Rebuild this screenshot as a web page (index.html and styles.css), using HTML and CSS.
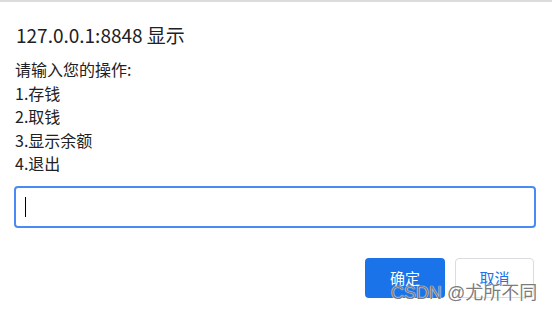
FILE: index.html
```html
<!DOCTYPE html>
<html lang="zh">
<head>
<meta charset="utf-8">
<title>prompt</title>
<link rel="stylesheet" href="styles.css">
</head>
<body>
<div class="topline"></div>
<div class="dialog">
  <div class="title">127.0.0.1:8848 显示</div>
  <div class="message">
    <div class="line">请输入您的操作:</div>
    <div class="line">1.存钱</div>
    <div class="line">2.取钱</div>
    <div class="line">3.显示余额</div>
    <div class="line">4.退出</div>
  </div>
  <div class="field"><span class="caret"></span></div>
  <div class="actions">
    <button class="btn btn-primary">确定</button>
    <button class="btn btn-secondary">取消</button>
  </div>
</div>
<div class="watermark">CSDN @尤所不同</div>
</body>
</html>
```
FILE: styles.css
```css
html, body {
  margin: 0;
  padding: 0;
  background: #fff;
}
body {
  width: 552px;
  height: 314px;
  overflow: hidden;
  position: relative;
  font-family: "Noto Sans CJK SC", "Noto Sans", sans-serif;
  color: #202124;
}
.topline {
  height: 2px;
  background: #dcdcdc;
}
.dialog {
  padding: 20px 16px 0 14px;
}
.title {
  font-size: 19px;
  line-height: 26px;
  padding-left: 2px;
}
.message {
  margin-top: 10px;
  padding-left: 1px;
  font-size: 16px;
  line-height: 23.5px;
}
.field {
  margin-top: 10px;
  height: 38px;
  width: 509px;
  border: 2px solid #4a8af4;
  border-radius: 4px;
  display: flex;
  align-items: center;
  padding-left: 9px;
  box-sizing: content-box;
}
.caret {
  display: block;
  width: 1px;
  height: 20px;
  background: #000;
}
.actions {
  display: flex;
  justify-content: flex-end;
  gap: 10px;
  margin-top: 30px;
  padding-right: 2px;
}
.btn {
  width: 80px;
  height: 40px;
  border-radius: 4px;
  font-family: "Noto Sans CJK SC", sans-serif;
  font-size: 15px;
  padding: 0;
  box-sizing: border-box;
}
.btn-primary {
  background: #1a73e8;
  color: #fff;
  border: none;
}
.btn-secondary {
  width: 79px;
  background: #fff;
  color: #1a73e8;
  border: 1px solid #dadce0;
}
.watermark {
  position: absolute;
  left: 391px;
  top: 281px;
  font-family: "Liberation Sans", "Noto Sans CJK SC", sans-serif;
  font-size: 18px;
  line-height: 24px;
  color: rgba(100, 100, 100, 0.85);
  text-shadow: 0 0 1px #fff, 0 0 1px #fff;
  white-space: nowrap;
}
```
